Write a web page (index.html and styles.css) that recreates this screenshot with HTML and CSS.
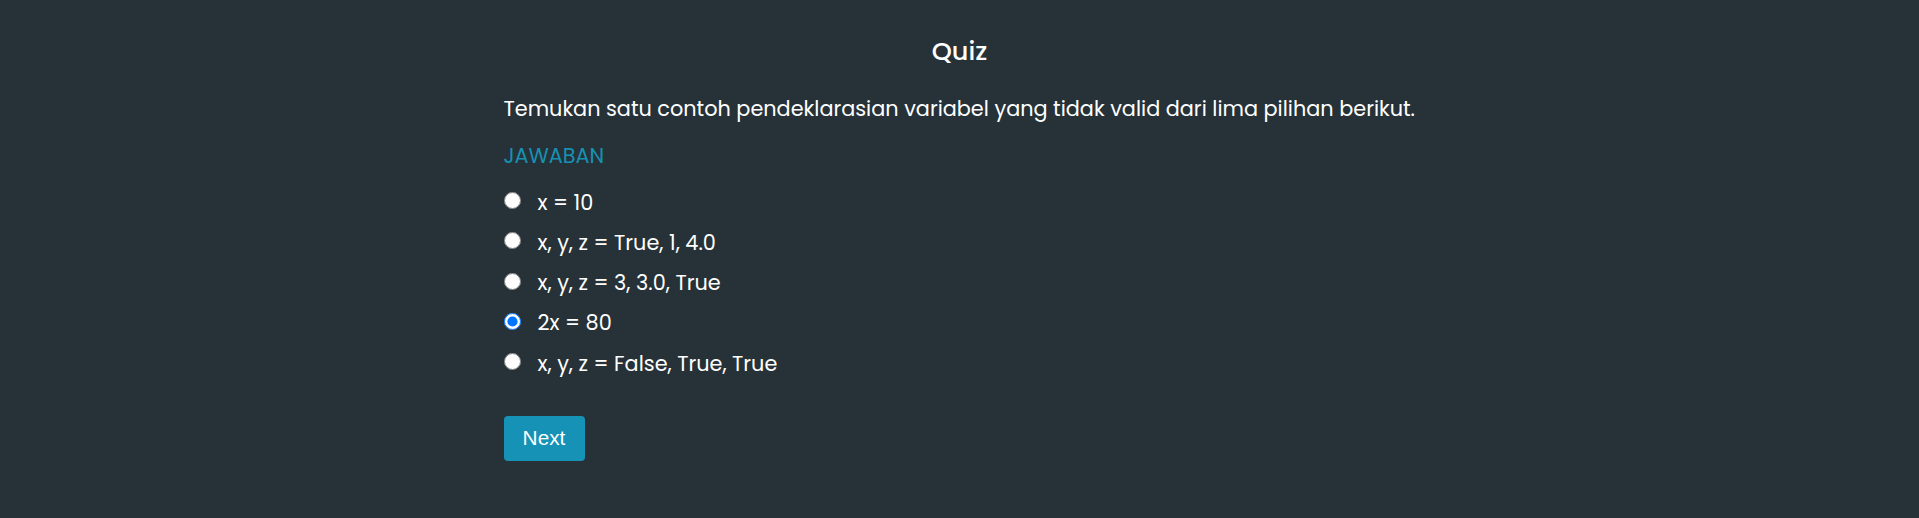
FILE: index.html
```html
<!DOCTYPE html>
<html lang="id">
<head>
<meta charset="utf-8">
<title>Quiz</title>
<link rel="stylesheet" href="styles.css">
</head>
<body>
<main class="quiz">
  <h1 class="quiz-title">Quiz</h1>
  <p class="quiz-question">Temukan satu contoh pendeklarasian variabel yang tidak valid dari lima pilihan berikut.</p>
  <div class="quiz-label">JAWABAN</div>
  <form class="quiz-form">
    <ul class="options">
      <li class="option"><label class="option-label"><input type="radio" name="answer" class="option-radio"><span>x = 10</span></label></li>
      <li class="option"><label class="option-label"><input type="radio" name="answer" class="option-radio"><span>x, y, z = True, 1, 4.0</span></label></li>
      <li class="option"><label class="option-label"><input type="radio" name="answer" class="option-radio"><span>x, y, z = 3, 3.0, True</span></label></li>
      <li class="option"><label class="option-label"><input type="radio" name="answer" class="option-radio" checked><span>2x = 80</span></label></li>
      <li class="option"><label class="option-label"><input type="radio" name="answer" class="option-radio"><span>x, y, z = False, True, True</span></label></li>
    </ul>
    <button type="button" class="btn-next">Next</button>
  </form>
</main>
</body>
</html>
```
FILE: styles.css
```css
html, body {
  margin: 0;
  padding: 0;
}

body {
  background: #263238;
  color: #ffffff;
  font-family: "Poppins", "Open Sans", sans-serif;
  min-height: 518px;
}

.quiz {
  width: 912px;
  margin: 0 auto;
  padding-top: 36px;
}

.quiz-title {
  margin: 0;
  text-align: center;
  font-size: 25.6px;
  font-weight: 500;
  line-height: 30px;
}

.quiz-question {
  margin: 27.5px 0 0;
  font-size: 20.8px;
  line-height: 30px;
}

.quiz-label {
  margin-top: 20px;
  font-size: 20.8px;
  line-height: 24px;
  color: #1791b3;
}

.quiz-form {
  margin: 0;
}

.options {
  list-style: none;
  margin: 15px 0 0;
  padding: 0;
}

.option {
  height: 40.3px;
}

.option-label {
  display: flex;
  align-items: center;
  gap: 17px;
  height: 40.3px;
  font-size: 20.8px;
  line-height: 40.3px;
}

.option-radio {
  width: 17px;
  height: 17px;
  margin: 0 0 4.4px 0;
  flex: none;
}

.btn-next {
  display: block;
  margin-top: 32px;
  width: 81px;
  height: 45px;
  padding: 0;
  border: none;
  border-radius: 4px;
  background: #1592b5;
  color: #ffffff;
  font-family: "Liberation Sans", Arial, sans-serif;
  font-size: 20.8px;
}
```
